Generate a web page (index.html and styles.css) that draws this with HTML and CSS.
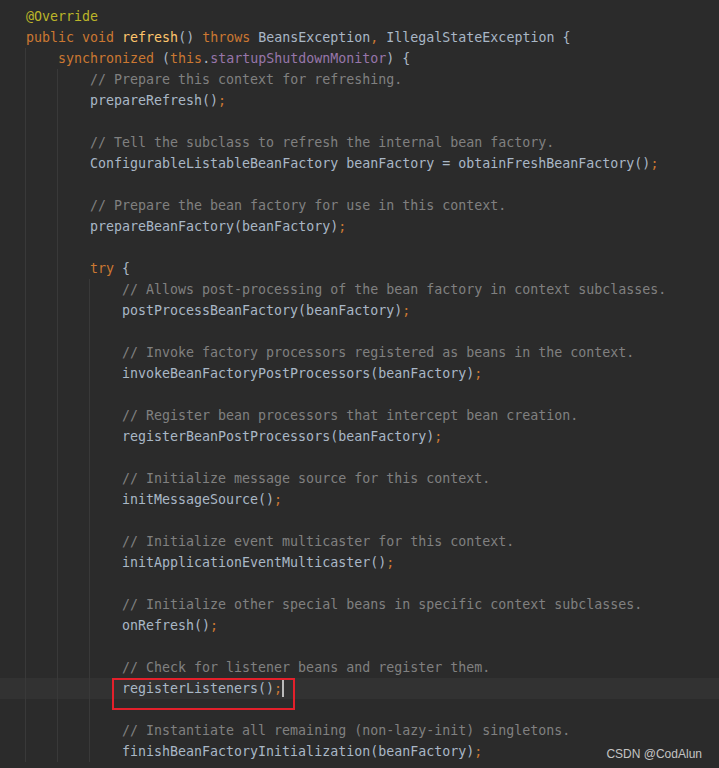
FILE: index.html
```html
<!DOCTYPE html>
<html lang="en">
<head>
    <meta charset="UTF-8">
    <title>refresh()</title>
    <link rel="stylesheet" href="styles.css">
</head>
<body>
    <div class="editor">
        <div class="line"><span class="an">@Override</span></div>
        <div class="line"><span class="kw">public void </span><span class="fn">refresh</span>() <span class="kw">throws </span>BeansException<span class="kw">, </span>IllegalStateException {</div>
        <div class="line"><span class="g"></span><span class="kw">synchronized </span>(<span class="kw">this</span>.<span class="fd">startupShutdownMonitor</span>) {</div>
        <div class="line"><span class="g"></span><span class="g"></span><span class="cm">// Prepare this context for refreshing.</span></div>
        <div class="line"><span class="g"></span><span class="g"></span>prepareRefresh()<span class="kw">;</span></div>
        <div class="line"><span class="g"></span><span class="g"></span></div>
        <div class="line"><span class="g"></span><span class="g"></span><span class="cm">// Tell the subclass to refresh the internal bean factory.</span></div>
        <div class="line"><span class="g"></span><span class="g"></span>ConfigurableListableBeanFactory beanFactory = obtainFreshBeanFactory()<span class="kw">;</span></div>
        <div class="line"><span class="g"></span><span class="g"></span></div>
        <div class="line"><span class="g"></span><span class="g"></span><span class="cm">// Prepare the bean factory for use in this context.</span></div>
        <div class="line"><span class="g"></span><span class="g"></span>prepareBeanFactory(beanFactory)<span class="kw">;</span></div>
        <div class="line"><span class="g"></span><span class="g"></span></div>
        <div class="line"><span class="g"></span><span class="g"></span><span class="kw">try </span>{</div>
        <div class="line"><span class="g"></span><span class="g"></span><span class="g"></span><span class="cm">// Allows post-processing of the bean factory in context subclasses.</span></div>
        <div class="line"><span class="g"></span><span class="g"></span><span class="g"></span>postProcessBeanFactory(beanFactory)<span class="kw">;</span></div>
        <div class="line"><span class="g"></span><span class="g"></span><span class="g"></span></div>
        <div class="line"><span class="g"></span><span class="g"></span><span class="g"></span><span class="cm">// Invoke factory processors registered as beans in the context.</span></div>
        <div class="line"><span class="g"></span><span class="g"></span><span class="g"></span>invokeBeanFactoryPostProcessors(beanFactory)<span class="kw">;</span></div>
        <div class="line"><span class="g"></span><span class="g"></span><span class="g"></span></div>
        <div class="line"><span class="g"></span><span class="g"></span><span class="g"></span><span class="cm">// Register bean processors that intercept bean creation.</span></div>
        <div class="line"><span class="g"></span><span class="g"></span><span class="g"></span>registerBeanPostProcessors(beanFactory)<span class="kw">;</span></div>
        <div class="line"><span class="g"></span><span class="g"></span><span class="g"></span></div>
        <div class="line"><span class="g"></span><span class="g"></span><span class="g"></span><span class="cm">// Initialize message source for this context.</span></div>
        <div class="line"><span class="g"></span><span class="g"></span><span class="g"></span>initMessageSource()<span class="kw">;</span></div>
        <div class="line"><span class="g"></span><span class="g"></span><span class="g"></span></div>
        <div class="line"><span class="g"></span><span class="g"></span><span class="g"></span><span class="cm">// Initialize event multicaster for this context.</span></div>
        <div class="line"><span class="g"></span><span class="g"></span><span class="g"></span>initApplicationEventMulticaster()<span class="kw">;</span></div>
        <div class="line"><span class="g"></span><span class="g"></span><span class="g"></span></div>
        <div class="line"><span class="g"></span><span class="g"></span><span class="g"></span><span class="cm">// Initialize other special beans in specific context subclasses.</span></div>
        <div class="line"><span class="g"></span><span class="g"></span><span class="g"></span>onRefresh()<span class="kw">;</span></div>
        <div class="line"><span class="g"></span><span class="g"></span><span class="g"></span></div>
        <div class="line"><span class="g"></span><span class="g"></span><span class="g"></span><span class="cm">// Check for listener beans and register them.</span></div>
        <div class="line current"><span class="g"></span><span class="g"></span><span class="g"></span><span class="marked">registerListeners()<span class="kw">;</span><span class="caret"></span></span></div>
        <div class="line"><span class="g"></span><span class="g"></span><span class="g"></span></div>
        <div class="line"><span class="g"></span><span class="g"></span><span class="g"></span><span class="cm">// Instantiate all remaining (non-lazy-init) singletons.</span></div>
        <div class="line"><span class="g"></span><span class="g"></span><span class="g"></span>finishBeanFactoryInitialization(beanFactory)<span class="kw">;</span></div>

        <div class="watermark">CSDN @CodAlun</div>
    </div>
</body>
</html>
```

FILE: styles.css
```css
body {
    margin: 0;
    background-color: #2b2b2b;
    overflow: hidden;
}

.editor {
    position: relative;
    height: 768px;
    padding-top: 6px;
    box-sizing: border-box;
    font-family: 'DejaVu Sans Mono', 'Liberation Mono', monospace;
    font-size: 13.3px;
    color: #a9b7c6;
    background-color: #2b2b2b;
}

.line {
    height: 21px;
    line-height: 22px;
    padding-left: 26px;
    white-space: pre;
}

.line.current {
    background-color: #323232;
}

/* indent guide */
.g {
    display: inline-block;
    width: 32px;
    height: 21px;
    vertical-align: top;
    box-shadow: -1px 0 0 #393939;
}

.kw { color: #cc7832; }
.an { color: #bbb529; }
.fn { color: #ffc66d; }
.fd { color: #9876aa; }
.cm { color: #808080; }

.marked {
    position: relative;
}

.marked::after {
    content: '';
    position: absolute;
    left: -10px;
    top: -3px;
    width: 179px;
    height: 28px;
    border: 2px solid #e3202b;
}

.caret {
    display: inline-block;
    width: 2px;
    height: 17px;
    vertical-align: -4px;
    background-color: #bbbbbb;
}

.watermark {
    position: absolute;
    right: 17px;
    bottom: 7px;
    font-family: 'Liberation Sans', Arial, sans-serif;
    font-size: 12px;
    color: #c4c4c4;
}
```
